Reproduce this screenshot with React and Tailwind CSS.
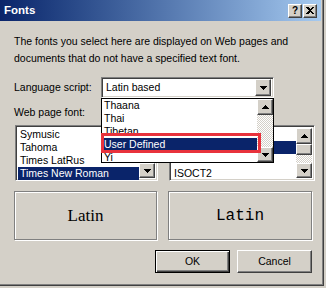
import React from "react";

const raised =
  "bg-[#d4d0c8] border border-t-white border-l-white border-r-[#404040] border-b-[#404040] shadow-[inset_-1px_-1px_0_#808080]";
const sunken =
  "border border-t-[#808080] border-l-[#808080] border-r-white border-b-white shadow-[inset_1px_1px_0_#404040,inset_-1px_-1px_0_#d4d0c8]";
const dither =
  "bg-[repeating-conic-gradient(#ffffff_0_25%,#d4d0c8_0_50%)] bg-[length:2px_2px]";

function Arrow({ up }) {
  return (
    <svg width="7" height="4" viewBox="0 0 7 4" shapeRendering="crispEdges">
      <path d={up ? "M3.5 0L7 4H0z" : "M0 0h7L3.5 4z"} fill="#000" />
    </svg>
  );
}

function ArrowBtn({ up, className = "" }) {
  return (
    <div className={`flex items-center justify-center ${raised} ${className}`}>
      <Arrow up={up} />
    </div>
  );
}

function Scrollbar({ thumb }) {
  return (
    <div className="flex w-[16px] flex-col">
      <ArrowBtn up className="h-[16px] w-[16px] shrink-0" />
      {thumb && <div className={`h-[11px] w-[16px] shrink-0 ${raised}`} />}
      <div className={`flex-1 ${dither}`} />
      <ArrowBtn className="h-[15px] w-[16px] shrink-0" />
    </div>
  );
}

function Row({ children, selected }) {
  return (
    <div
      className={`h-[13px] whitespace-nowrap pl-[2px] leading-[13px] ${
        selected ? "bg-[#0a246a] text-white" : "text-black"
      }`}
    >
      {children}
    </div>
  );
}

export default function App() {
  const scripts = ["Thaana", "Thai", "Tibetan", "User Defined", "Yi"];
  const webFonts = ["Symusic", "Tahoma", "Times LatRus", "Times New Roman"];
  // only the last plain-text font shows below the open dropdown
  const plainFonts = ["Courier", "Courier New", "", "ISOCT2"];

  return (
    <div className="h-[288px] w-[326px] overflow-hidden bg-[#d4d0c8] font-['Liberation_Sans',Arial,sans-serif] text-[10.5px] text-black">
      <div className="relative h-[286px] w-[324px] border-r border-b border-r-[#404040] border-b-[#404040] shadow-[inset_-1px_-1px_0_#808080]">
        {/* title bar */}
        <div className="flex h-[21px] w-[321px] items-center bg-gradient-to-r from-[#0a246a] to-[#a6caf0] pl-[4px] pr-[4px]">
          <span className="flex-1 text-[11.5px] font-bold text-white">Fonts</span>
          <div className="flex gap-[1px]">
            <div className={`h-[14px] w-[14px] ${raised} flex items-center justify-center text-[10px] leading-none font-bold`}>
              ?
            </div>
            <div className={`h-[14px] w-[14px] ${raised} flex items-center justify-center`}>
              <svg width="8" height="7" viewBox="0 0 8 7" shapeRendering="crispEdges">
                <path d="M0 0h2l2 2 2-2h2L5 3.5 8 7H6L4 5 2 7H0l3-3.5z" fill="#000" />
              </svg>
            </div>
          </div>
        </div>

        <div className="pl-[14px] pt-[12px]">
          <p className="leading-[17px]">
            The fonts you select here are displayed on Web pages and
            <br />
            documents that do not have a specified text font.
          </p>

          <div className="mt-[10px] flex items-center">
            <span className="w-[87px]">Language script:</span>
            <div className={`flex h-[21px] w-[173px] items-center bg-white p-[2px] ${sunken}`}>
              <span className="flex-1 pl-[2px]">Latin based</span>
              <ArrowBtn className="h-[17px] w-[16px]" />
            </div>
          </div>

          <div className="mt-[7px] leading-[14px]">Web page font:</div>

          <div className="mt-[6px] ml-[1px] flex gap-[11px]">
            <div className={`flex h-[56px] w-[143px] bg-white p-[2px] ${sunken}`}>
              <div className="flex-1">
                {webFonts.map((f, i) => (
                  <Row key={f} selected={i === 3}>
                    {f}
                  </Row>
                ))}
              </div>
              <Scrollbar />
            </div>
            <div className={`flex h-[56px] w-[146px] bg-white p-[2px] ${sunken}`}>
              <div className="flex-1">
                {plainFonts.map((f, i) => (
                  <Row key={i} selected={i === 1}>
                    {f}
                  </Row>
                ))}
              </div>
              <Scrollbar thumb />
            </div>
          </div>

          <div className="mt-[10px] flex gap-[11px]">
            <div className="flex h-[49px] w-[143px] items-center justify-center border border-[#808080] shadow-[inset_1px_1px_0_#ffffff,1px_1px_0_#ffffff] font-['Liberation_Serif',serif] text-[17px]">
              Latin
            </div>
            <div className="flex h-[49px] w-[144px] items-center justify-center border border-[#808080] shadow-[inset_1px_1px_0_#ffffff,1px_1px_0_#ffffff] font-['Liberation_Mono',monospace] text-[16px]">
              Latin
            </div>
          </div>

          <div className="mt-[10px] ml-[141px] flex gap-[7px]">
            <div className="flex h-[23px] w-[75px] items-center justify-center border border-black bg-[#d4d0c8] shadow-[inset_1px_1px_0_#ffffff,inset_-1px_-1px_0_#404040,inset_-2px_-2px_0_#808080]">
              OK
            </div>
            <div className={`flex h-[23px] w-[75px] items-center justify-center ${raised}`}>
              Cancel
            </div>
          </div>
        </div>

        {/* open dropdown list of the Language script combo */}
        <div className="absolute left-[101px] top-[98px] flex h-[65px] w-[173px] overflow-hidden border border-black bg-white">
          <div className="flex-1">
            {scripts.map((s, i) => (
              <Row key={s} selected={i === 3}>
                {s}
              </Row>
            ))}
          </div>
          <Scrollbar />
        </div>
        {/* red highlight annotation */}
        <div className="absolute left-[101px] top-[133px] h-[20px] w-[160px] border-[3px] border-[#e8323c]" />
      </div>
    </div>
  );
}
